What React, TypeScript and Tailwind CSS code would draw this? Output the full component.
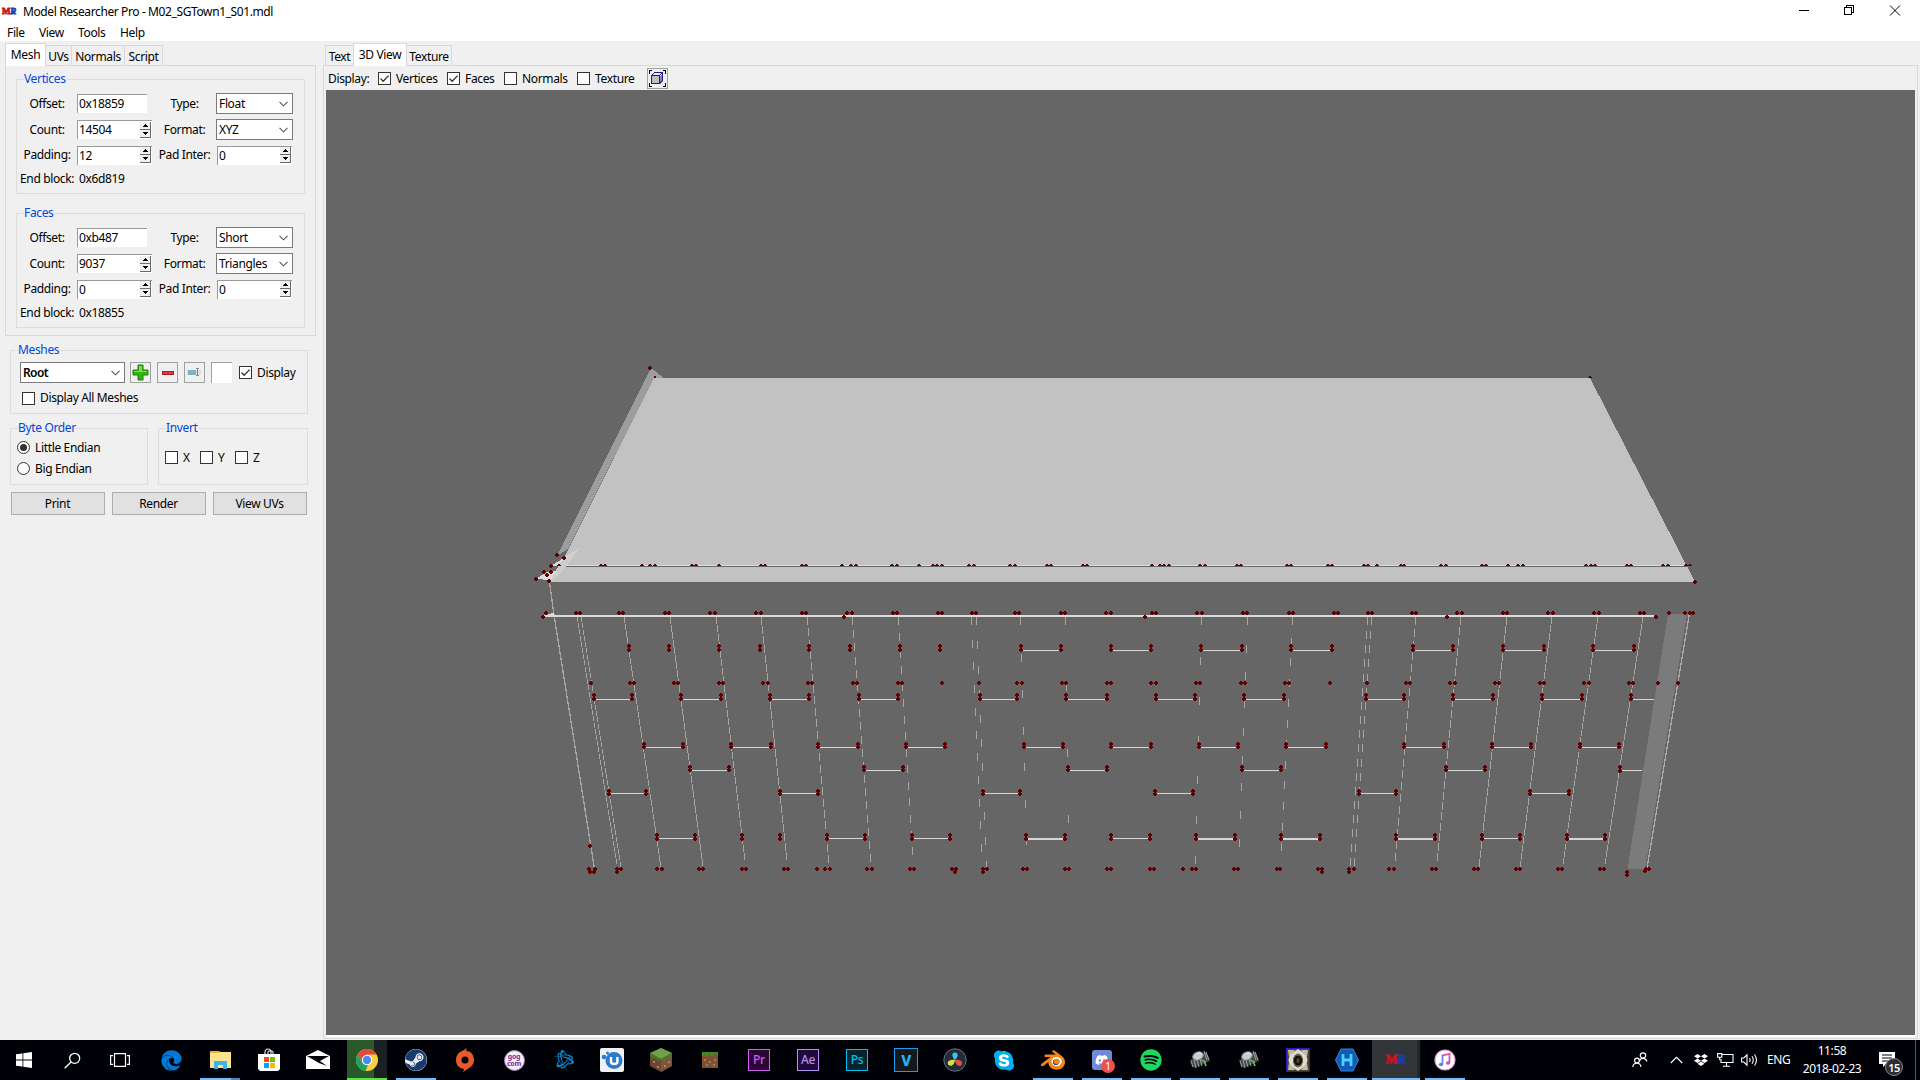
import React from "react";
import { FaEdge, FaSteam, FaSpotify, FaDropbox, FaSkype, FaDiscord, FaBattleNet } from "react-icons/fa";
import { SiBlender } from "react-icons/si";

/* ---------- form controls ---------- */

function Check({ on = false }: { on?: boolean }) {
  return (
    <span className="flex size-[13px] shrink-0 border border-[#333] bg-white">
      {on && (
        <svg viewBox="0 0 11 11" className="size-[11px]" fill="none" stroke="#333" strokeWidth="1.3">
          <path d="M1.5 5.5 4.2 8.2 9.6 2.6" />
        </svg>
      )}
    </span>
  );
}

function Radio({ on = false }: { on?: boolean }) {
  return (
    <span className="flex size-[13px] shrink-0 items-center justify-center rounded-full border border-[#333] bg-white">
      {on && <span className="size-[7px] rounded-full bg-[#333]" />}
    </span>
  );
}

function Select({ value, wide = false }: { value: string; wide?: boolean }) {
  return (
    <div className={(wide ? "w-[105px] font-semibold tracking-[-0.6px]" : "-ml-px w-[77px]") + " flex h-[21px] shrink-0 items-center justify-between border border-[#7a7a7a] bg-white pr-[4px] pl-[2px]"}>
      <span>{value}</span>
      <svg viewBox="0 0 9 6" className="h-[6px] w-[9px]" fill="none" stroke="#555" strokeWidth="1.1">
        <path d="M.5.8 4.5 4.8 8.5.8" />
      </svg>
    </div>
  );
}

function Entry({ value }: { value: string }) {
  return <div className="flex h-[19px] w-[70px] shrink-0 items-center border-t border-l border-[#999] bg-white pl-px">{value}</div>;
}

function Spin({ value }: { value: string }) {
  return (
    <div className="flex h-[19px] w-[75px] shrink-0 items-center justify-between border-t border-l border-[#999] bg-white pl-px">
      <span>{value}</span>
      <svg viewBox="0 0 12 17" className="h-[17px] w-[12px]" shapeRendering="crispEdges">
        <path d="M0 0h11v16H0z" fill="#f0f0f0" />
        <path d="M10.500 0v16M0 7.500h11M0 15.500h11" stroke="#6b6b6b" fill="none" />
        <path d="M3 5h5V4H7V3H6V2H5v1H4v1H3zM3 10h5v1H7v1H6v1H5v-1H4v-1H3z" fill="#000" />
      </svg>
    </div>
  );
}

function Group({ title, className, children }: { title: string; className: string; children: React.ReactNode }) {
  return (
    <section className={"flex flex-col border border-[#dcdcdc] " + className}>
      <h2 className="-mt-[10px] ml-[7px] flex h-[18px] w-fit shrink-0 items-center bg-[#f0f0f0] text-[#0046d5]">{title}</h2>
      {children}
    </section>
  );
}

type BlockData = { title: string; offset: string; type: string; count: string; format: string; padding: string; inter: string; end: string };

function BlockGroup({ d, className }: { d: BlockData; className: string }) {
  const row = "grid grid-cols-[60px_75px_65px_77px] items-center shrink-0";
  const lab = "text-center whitespace-nowrap";
  return (
    <Group title={d.title} className={"h-[115px] w-[289px] " + className}>
      <div className={row + " mt-[3px] h-[25px]"}>
        <span className={lab}>Offset:</span>
        <Entry value={d.offset} />
        <span className={lab}>Type:</span>
        <Select value={d.type} />
      </div>
      <div className={row + " h-[27px]"}>
        <span className={lab}>Count:</span>
        <Spin value={d.count} />
        <span className={lab}>Format:</span>
        <Select value={d.format} />
      </div>
      <div className={row + " h-[24px]"}>
        <span className={lab}>Padding:</span>
        <Spin value={d.padding} />
        <span className={lab}>Pad Inter:</span>
        <Spin value={d.inter} />
      </div>
      <div className="flex h-[23px] items-center pl-[3px]">
        <span className="w-[59px]">End block:</span>
        <span>{d.end}</span>
      </div>
    </Group>
  );
}

function Tab({ label, active = false, className }: { label: string; active?: boolean; className: string }) {
  return (
    <div
      className={
        (active ? "h-[23px] bg-white border-x pb-px " : "h-[20px] border-r pt-[2px] ") +
        "flex shrink-0 items-center justify-center border-t border-[#d9d9d9] whitespace-nowrap " +
        className
      }
    >
      {label}
    </div>
  );
}

/* ---------- 3D scene ---------- */

type Part = {
  x0: number;
  sx: number;
  walls: [number, number][];
  dots: [number, number[]][];
  bars: [number, number, [number, number, number?][]][];
};

const SY = 2.9037;
const Y = (v: number) => 350 + v / SY;

const parts: Part[] = [
  {
    x0: 520,
    sx: 2.6133,
    walls: [[149, 255], [160, 265], [273, 370], [393, 480], [512, 590], [630, 700], [751, 809], [869, 919], [989, 1029], [1180, 1209], [1193, 1220], [1307, 1325], [1425, 1435]],
    dots: [
      [763, [69, 146, 157, 259, 270, 379, 390, 497, 510, 617, 629, 736, 748, 855, 867, 974, 985, 1093, 1102, 1180, 1192, 1293, 1304, 1413, 1424]],
      [776, [60, 847]],
      [866, [285, 390, 520, 627, 756, 862, 992, 1098]],
      [968, [186, 287, 297, 403, 414, 520, 531, 636, 648, 753, 764, 870, 881, 987, 998, 1103, 1199, 1300, 1311, 1416, 1427]],
      [1415, [580, 680]],
      [1507, [181, 197, 253, 264, 357, 370, 468, 479, 579, 590, 690, 700, 777, 798, 809, 908, 919, 1019, 1030, 1129, 1140, 1210, 1220, 1315, 1324, 1425, 1435]],
      [1517, [183, 194, 254, 1138, 1210]],
      [1439, [182]], [51, [341]], [594, [96]], [605, [116]], [627, [80]], [644, [63, 80]], [653, [70]], [664, [41]], [671, [77]],
    ],
    bars: [
      [860, 872, [[1308, 1414]]],
      [1003, 1014, [[193, 292], [421, 525], [653, 756], [885, 989], [1201, 1300], [1428, 1533]]],
      [1143, 1154, [[323, 426], [551, 655], [780, 884], [1010, 1111], [1316, 1418]]],
      [1211, 1221, [[445, 547], [900, 1001], [1431, 1533]]],
      [1280, 1288, [[233, 329], [679, 779], [1211, 1307]]],
      [1409, 1419, [[358, 458], [802, 902], [1025, 1125], [1323, 1423, 2]]],
    ],
  },
  {
    x0: 1100,
    sx: 2.529,
    walls: [[258, 242], [373, 350], [487, 456], [676, 631], [687, 642], [798, 744], [912, 850], [1028, 957], [1144, 1063], [1259, 1169], [1374, 1276]],
    dots: [
      [763, [15, 27, 131, 142, 246, 257, 362, 373, 478, 489, 592, 602, 678, 689, 788, 799, 903, 915, 1020, 1030, 1134, 1146, 1249, 1262, 1366, 1376, 1439, 1479, 1491, 1500]],
      [776, [115, 878, 1405]],
      [968, [17, 28, 129, 141, 243, 254, 356, 367, 468, 479, 582, 676, 773, 784, 885, 897, 998, 1010, 1112, 1122, 1225, 1236, 1338, 1348, 1410, 1461]],
      [1507, [18, 29, 126, 137, 210, 232, 243, 340, 350, 447, 456, 551, 562, 630, 642, 732, 743, 839, 850, 945, 956, 1052, 1063, 1158, 1169, 1264, 1275, 1380, 1388]],
      [1517, [561, 630, 1334]], [1513, [1378]], [1523, [1334]], [673, [1504]],
    ],
    bars: [
      [860, 872, [[28, 130], [255, 358], [484, 587], [791, 893], [1019, 1122], [1247, 1350]]],
      [1003, 1014, [[141, 241], [365, 466], [673, 769], [893, 994], [1118, 1218]]],
      [1143, 1154, [[28, 128], [250, 349], [471, 571], [769, 870], [991, 1090], [1214, 1313]]],
      [1211, 1221, [[358, 458], [875, 974]]],
      [1280, 1288, [[138, 236], [655, 748], [1087, 1186]]],
      [1409, 1419, [[29, 126], [243, 341, 2], [459, 556, 2], [749, 847, 2], [965, 1062], [1180, 1277, 2]]],
    ],
  },
];

const eaves: number[][] = [
  [211, 223, 319, 341, 353, 449, 460, 520, 629, 640, 736, 748, 842, 866, 878, 973, 985, 1044, 1080, 1091, 1102, 1174, 1186, 1281, 1293, 1376, 1387, 1470, 1482, 103],
  [131, 152, 163, 174, 254, 266, 346, 357, 473, 484, 577, 587, 668, 678, 700, 760, 770, 862, 874, 966, 977, 1032, 1057, 1069, 1230, 1241, 1251, 1333, 1344, 1425, 1436, 1482, 1493],
];

const dot = (cx: number, cy: number) => `M${Math.round(cx) - 1} ${Math.round(cy) - 2}h2v1h1v2h-1v1h-2v-1h-1v-2h1z`;

function Scene() {
  let d = "";
  const lines: React.ReactNode[] = [];
  parts.forEach((p, i) => {
    const X = (v: number) => p.x0 + v / p.sx;
    p.walls.forEach(([a, b], k) => {
      const period = 252 / (Math.abs(b - a) / p.sx);
      const dash = Math.min(period - 1, 7.5);
      // each dash stays inside one pixel column, so every step is a plain vertical stroke
      let path = "";
      const n = Math.round(252 / period);
      for (let s = 0; s <= n; s++) {
        const y = 617 + s * period;
        if (y + dash > 869) break;
        const x = Math.floor(X(a) + ((y - 617 + dash / 2) / 252) * (X(b) - X(a)));
        path += `M${x} ${Math.round(y)}h1v${Math.round(dash)}h-1z`;
      }
      lines.push(<path key={`w${i}-${k}`} d={path} fill="#a6a6a6" />);
    });
    p.dots.forEach(([y, xs]) =>
      xs.forEach((x) => {
        if (y === 866 || y === 1415) d += dot(X(x), Y(y) - 2) + dot(X(x), Y(y) + 2);
        else d += dot(X(x), Y(y));
      }),
    );
    p.bars.forEach(([ya, yb, xs], r) =>
      xs.forEach(([a, b, h = 1], k) => {
        lines.push(<rect key={`b${i}-${r}-${k}`} x={Math.round(X(a))} y={Math.floor(Y(yb))} width={Math.round((b - a) / p.sx)} height={h} fill="#d6d6d6" />);
        [a, b].forEach((x) => {
          d += dot(X(x), Y(ya)) + dot(X(x), Y(yb));
        });
      }),
    );
    eaves[i].forEach((x) => {
      d += `M${Math.round(X(x)) - 2} 566v-1h1v-1h2v1h1v1z`;
    });
  });
  return (
    <svg viewBox="326 90 1589 945" className="block h-[945px] w-[1589px] bg-[#666]" shapeRendering="crispEdges">
      <path d="M654 378H1590L1695 582H550L565 566V556z" fill="#c2c2c2" />
      <path d="M651 368 664 378H654L568 549 557 556z" fill="#9d9d9d" />
      <path d="M580 548 565 557 551 566H560z" fill="#d8d8d8" />
      <path d="M580 548 561 562 556 570 549 581H552L562 572z" fill="#cdcdcd" />
      <path d="M536 579 547 572 557 571 550 580z" fill="#dcdcdc" />
      <path d="M566 565H1686V566H566z" fill="#dedede" />
      <path d="M566 566H1687V567H566z" fill="#666" />
      <path d="M549.500 582 554 615 594.500 869" stroke="#a6a6a6" strokeWidth="1.3" fill="none" />
      <path d="M544 615H1654V617H544z" fill="#dadada" />
      <path d="M547 615 552 613H554V617z" fill="#dadada" />
      {lines}
      <path d="M1631 699h23v1h-23zM1620 770h22v1h-22z" fill="#d6d6d6" />
      <path d="M1668 614H1687L1645 869H1627.500z" fill="#7b7b7b" />
      <path d="M1689.500 613 1647 868" stroke="#aaa" fill="none" strokeWidth="1.2" />
      <path d={dot(1630.700, 695.400) + dot(1630.700, 699.400) + dot(1619.500, 767) + dot(1619.500, 770.500) + d} fill="#600000" />
      <path d="M654 376h2v2h-2zM1589 376h2v1h1v1h-4v-1h1z" fill="#600000" />
    </svg>
  );
}

/* ---------- taskbar ---------- */

function Adobe({ t, c, bg }: { t: string; c: string; bg: string }) {
  return (
    <span style={{ borderColor: c, color: c, background: bg }} className="flex size-[22px] items-center justify-center border pb-px text-[12px] leading-none font-medium tracking-[-0.3px]">
      {t}
    </span>
  );
}

function Chip() {
  return (
    <svg viewBox="0 0 24 24" className="size-6" fill="none">
      <path d="M2 12 18 4l4 9L6 20z" fill="#454545" />
      <path d="m3 13 2 6m1-7 2 8m1-8 2 7m1-8 2 7m4-14 3 8m-5-9 3 9" stroke="#9a9a9a" strokeWidth="1.100" />
      <ellipse cx="10" cy="8" rx="5.500" ry="4" fill="#c3ced4" stroke="#808080" transform="rotate(-20 10 8)" />
      <path d="M9 5.500q3-1.500 5 .5" stroke="#f2f6f8" />
      <path d="m13 12 5 2M16 13l2 5" stroke="#66b36c" strokeWidth="1.800" />
    </svg>
  );
}

function Logo({ className }: { className: string }) {
  return (
    <span className={"flex items-center font-['Liberation_Serif'] leading-none font-bold " + className}>
      <span className="text-[#c8161d] [-webkit-text-stroke:0.8px_#c8161d]">M</span>
      <span className="text-[#1740a8] italic [-webkit-text-stroke:0.8px_#1740a8]">R</span>
    </span>
  );
}

const S = ({ children, c = "size-6" }: { children: React.ReactNode; c?: string }) => (
  <svg viewBox="0 0 24 24" className={c} fill="none">
    {children}
  </svg>
);

type App = { icon: React.ReactNode; run?: boolean };
const apps: App[] = [
  { icon: <FaEdge className="size-[21px] text-[#0078d7]" /> },
  {
    icon: (
      <S>
        <path d="M2 3h9l1 1h11v16H2z" fill="#fbe28c" />
        <path d="M2 3h9v2H2z" fill="#e8b72c" />
        <path d="M6 13h13v8h-4v-4h-5v4H6z" fill="#3fb2e8" />
      </S>
    ),
    run: true,
  },
  {
    icon: (
      <S>
        <path d="M8 7V4a3 3 0 0 1 6 0v3M11 7V4a3 3 0 0 1 5 0v3" stroke="#ddd" strokeWidth="1.200" />
        <path d="M1 6h22v15l-2 2H3l-2-2z" fill="#fff" />
        <path d="M7 9h5v5H7z" fill="#f25022" />
        <path d="M13 9h5v5h-5z" fill="#7fba00" />
        <path d="M7 15h5v5H7z" fill="#00a4ef" />
        <path d="M13 15h5v5h-5z" fill="#ffb900" />
      </S>
    ),
  },
  {
    icon: (
      <S>
        <path d="M0 8 12 2l12 6v13H0z" fill="#fff" />
        <path d="M1 8h22l-9 5 7 5-8-3z" fill="#000207" />
      </S>
    ),
  },
  {
    icon: (
      <S>
        <circle cx="12" cy="12" r="11" fill="#fbcf3c" />
        <path d="M2.500 6.500A11 11 0 0 1 21.500 6.500H12L7.500 14.500z" fill="#dd4b3e" />
        <path d="M2.500 6.500 7.500 14.500 13 17l-2.500 6A11 11 0 0 1 2.500 6.500" fill="#1da462" />
        <circle cx="12" cy="12" r="5.200" fill="#fff" />
        <circle cx="12" cy="12" r="4.200" fill="#4c8bf5" />
      </S>
    ),
  },
  {
    icon: (
      <span className="flex size-[22px] items-center justify-center rounded-full bg-[#e8edf2]">
        <FaSteam className="size-[22px] text-[#163b6e]" />
      </span>
    ),
    run: true,
  },
  {
    icon: (
      <S>
        <path d="M14 0 13 3c6 0 8 5 8 9 0 6-5 8-8 10l-3 2 1-3c-6-1-8-5-8-9C3 6 7 4 10 2.500z" fill="#e8592b" />
        <circle cx="12" cy="12" r="3.500" fill="#000207" />
      </S>
    ),
  },
  {
    icon: (
      <span className="flex size-[21px] flex-col items-center justify-center rounded-full border border-[#a678b8] bg-[#f4eef6] pb-px text-center text-[7px] leading-[7px] font-bold tracking-[-0.2px] whitespace-pre text-[#7a2f93]">
        {"gog\ncom"}
      </span>
    ),
  },
  { icon: <FaBattleNet className="size-[21px] text-[#0e86d4]" /> },
  {
    icon: (
      <S>
        <rect width="24" height="24" rx="2" fill="#eef1f4" />
        <circle cx="14" cy="12.500" r="8.500" fill="#2f7ac8" />
        <circle cx="4" cy="9" r="2.300" fill="#2f7ac8" />
        <circle cx="7.500" cy="5" r="1.500" fill="#2f7ac8" />
        <path d="M11 9v4.500q0 2.500 3.200 2.500t3.200-2.500V9" stroke="#fff" strokeWidth="2.500" />
      </S>
    ),
  },
  {
    icon: (
      <S>
        <path d="m12 0 11 5v13l-11 6L1 18V5z" fill="#6b4630" />
        <path d="m12 0 11 5-11 6L1 5z" fill="#6fa04b" />
        <path d="m1 5 11 6 11-6v3l-3 3-2-1-3 3-3-1-3 1-3-3-2 1-2-2z" fill="#3f7a2c" />
        <path d="M12 12v12l11-6V8z" fill="#8b5f43" opacity=".6" />
        <path d="M4 13h2v2H4zm4 5h2v2H8zm7-1h2v2h-2zm4-4h2v2h-2z" fill="#a98467" />
      </S>
    ),
  },
  {
    icon: (
      <S>
        <path d="M4 4h16v16H4z" fill="#7c5236" />
        <path d="M4 4h16v3h-2V6h-2v2h-3V6h-2v2H8V7H6v1H4z" fill="#3f8a22" />
        <path d="M6 11h2v2H6zm5 2h2v2h-2zm5-2h2v2h-2zM8 16h2v2H8zm7 0h2v2h-2z" fill="#a87b55" />
      </S>
    ),
  },
  { icon: <Adobe t="Pr" c="#d35bf0" bg="#2a0634" /> },
  { icon: <Adobe t="Ae" c="#b58cf0" bg="#1f0a40" /> },
  { icon: <Adobe t="Ps" c="#00c0f0" bg="#062430" /> },
  {
    icon: <span className="flex size-6 items-center justify-center border border-[#1c9cea] bg-[#15191d] text-[15px] leading-none font-extrabold text-[#21b4f5]">V</span>,
  },
  {
    icon: (
      <S>
        <circle cx="12" cy="12" r="11.200" fill="#202c38" stroke="#66727c" />
        <path d="M12 12C8 8 9 4.500 12 4.500S16 8 12 12" fill="#38c4ee" />
        <path d="M12 12c-1 6-4.500 6.500-6.500 5S5 11 12 12" fill="#d9dc48" />
        <path d="M12 12c7-1 8 3 6.500 5s-6 1-6.500-5" fill="#ee4a43" />
      </S>
    ),
  },
  {
    icon: (
      <span className="flex size-[22px] items-center justify-center rounded-full bg-[radial-gradient(circle,#fff_55%,transparent_56%)]">
        <FaSkype className="size-[23px] text-[#00aff0]" />
      </span>
    ),
  },
  {
    icon: (
      <span className="flex size-6 items-center justify-center bg-[radial-gradient(circle_at_15px_14px,#1a5296_3px,#fff_3.5px,#fff_6px,transparent_6.5px)]">
        <SiBlender className="size-6" color="#f5851f" />
      </span>
    ),
    run: true,
  },
  {
    icon: (
      <span className="relative flex size-5 items-center justify-center rounded-[3px] bg-[#7289da]">
        <FaDiscord className="size-[14px] text-white" />
        <span className="absolute top-[9px] left-[9px] flex size-[14px] items-center justify-center rounded-full bg-[#f04f4f] text-[10px] leading-none text-white">1</span>
      </span>
    ),
    run: true,
  },
  { icon: <FaSpotify className="size-[22px] text-[#1ed760]" />, run: true },
  { icon: <Chip />, run: true },
  { icon: <Chip />, run: true },
  {
    icon: (
      <S>
        <path d="M.5.5h23v23H.5z" fill="#4a4434" stroke="#2a18c0" />
        <path d="M2 2h7L3 9zM22 2h-7l6 7zM2 22h7l-6-7zM22 22h-7l6-7z" fill="#c8bd98" />
        <path d="M12 1Q31 12 12 23-7 12 12 1" fill="#dcdcd4" />
        <ellipse cx="12" cy="12.500" rx="5" ry="7" fill="#6f6a54" />
        <ellipse cx="12" cy="12.500" rx="4.500" ry="5.500" fill="#14110c" stroke="#6e633e" />
        <ellipse cx="12" cy="12.500" rx="1.500" ry="2.500" fill="#5c4a20" />
      </S>
    ),
    run: true,
  },
  {
    icon: (
      <S>
        <path d="M6 1h12l5.500 11L18 23H6L.5 12z" fill="#1458b8" stroke="#2f84dd" />
        <path d="M8 6v12M16 6v12M8 12h8" stroke="#46d3f7" strokeWidth="2.800" />
      </S>
    ),
    run: true,
  },
  { icon: <Logo className="pb-[3px] pl-[2px] text-[13px]" />, run: true },
  {
    icon: (
      <S>
        <defs>
          <linearGradient id="note" x1="0" y1="1" x2="1" y2="0">
            <stop offset="0" stopColor="#3b9ef2" />
            <stop offset=".5" stopColor="#a45de0" />
            <stop offset="1" stopColor="#fb4a73" />
          </linearGradient>
        </defs>
        <circle cx="12" cy="12" r="10" fill="#fff" stroke="#e9a3cf" strokeWidth="1.200" />
        <path d="M9.500 16V7.500l7-1.700v9" stroke="url(#note)" strokeWidth="1.800" />
        <ellipse cx="8" cy="16.500" rx="2.200" ry="1.800" fill="#6a7cea" />
        <ellipse cx="15" cy="15" rx="2.200" ry="1.800" fill="#d455b0" />
      </S>
    ),
    run: true,
  },
];

const CHROME = 4;
const CURRENT = apps.length - 2;

function Taskbar() {
  return (
    <footer className="flex h-10 shrink-0 items-stretch bg-[#000207] text-white">
      <div className="flex w-12 items-center justify-center">
        <svg viewBox="0 0 16 16" className="size-4" fill="#fff">
          <path d="M0 2.300 6.500 1.400v6.200H0zM7.300 1.300 16 0v7.600H7.300zM0 8.400h6.500v6.200L0 13.700zM7.300 8.400H16V16l-8.700-1.300z" />
        </svg>
      </div>
      <div className="flex w-12 items-center justify-center">
        <svg viewBox="0 0 18 18" className="size-[17px]" fill="none" stroke="#fff" strokeWidth="1.400">
          <circle cx="11.300" cy="6.700" r="5.300" />
          <path d="M7.500 10.500.7 17.300" />
        </svg>
      </div>
      <div className="flex w-[50.5px] shrink-0 items-center justify-center pr-[2px]">
        <svg viewBox="0 0 20 14" className="h-[14px] w-5" fill="none" stroke="#fff" strokeWidth="1.200">
          <path d="M4.500.6h11v12.800h-11zM3 2.600H.6v8.800H3M17 2.600h2.400v8.800H17" />
        </svg>
      </div>
      {apps.map((a, i) => (
        <div key={i} className="flex w-[49px] shrink-0 justify-center">
          <div
            className={
              (i === CURRENT ? "w-12 shrink-0 bg-[#333639] " : i === CHROME ? "w-10 bg-linear-to-r from-[#29592a] from-67% to-[#1b2022] to-67% " : "w-10 ") +
              "flex flex-col items-center"
            }
          >
            <div className={(i === CURRENT ? "w-full border-r-[3px] border-[#25282b] " : "") + "flex h-[38px] items-center justify-center pt-[2px]"}>{a.icon}</div>
            {i === CHROME && <div className="h-[2px] w-10 bg-[#58e63e]" />}
            {i === 1 && (
              <div className="flex h-[2px] w-10 bg-[#5583b5]">
                <div className="w-[31px] bg-[#76b9f5]" />
              </div>
            )}
            {a.run && i !== 1 && <div className="h-[2px] w-full bg-[#76b9f5]" />}
          </div>
        </div>
      ))}
      <div className="ml-auto flex items-center">
        <svg viewBox="0 0 16 16" className="size-4" fill="none" stroke="#fff" strokeWidth="1.200">
          <circle cx="11" cy="3.500" r="2.700" />
          <path d="M7.500 9c1-3.500 6.500-3.500 7.300.5" />
          <circle cx="5" cy="8.500" r="2.400" />
          <path d="M.8 15c.4-5 7.600-5 8.200 0" />
        </svg>
        <svg viewBox="0 0 13 8" className="ml-[22px] h-2 w-[13px]" fill="none" stroke="#fff" strokeWidth="1.200">
          <path d="M.8 7 6.500 1.300 12.200 7" />
        </svg>
        <FaDropbox className="ml-[11px] size-[14px]" />
        <svg viewBox="0 0 17 14" className="ml-[9px] h-[14px] w-[17px]" fill="none" stroke="#fff" strokeWidth="1.100">
          <path d="M5 1.500h11v8H4V6M.6.6h4.200v3.600H.6zM2.700 4.200v3M9.500 9.500v3.500M6 13.300h7" />
        </svg>
        <svg viewBox="0 0 18 14" className="ml-[7px] h-[14px] w-[18px]" fill="none" stroke="#fff" strokeWidth="1.100">
          <path d="M.6 5h2.200L6 1.800v10.400L2.800 9H.6zM8.500 5q1.300 2 0 4M11 3.300q2.600 3.700 0 7.400M13.500 1.500q4 5.500 0 11" />
        </svg>
        <span className="ml-[8px] w-[23px] tracking-[-0.4px] whitespace-nowrap">ENG</span>
        <div className="ml-[12px] flex w-[60px] flex-col items-center leading-[18px] tracking-[-0.4px] whitespace-nowrap">
          <span>11:58</span>
          <span>2018-02-23</span>
        </div>
        <div className="relative ml-[16px] size-6">
          <svg viewBox="0 0 24 24" className="size-6">
            <path d="M1 4h16v12H8l-3 3v-3H1z" fill="#fff" />
            <path d="M4 7h10M4 10h10M4 13h6" stroke="#000" />
          </svg>
          <span className="absolute top-[10px] left-[7px] flex size-[18px] items-center justify-center rounded-full border border-[#888] bg-[#2c2e31] text-[11px] leading-none font-semibold tracking-[-0.5px]">15</span>
        </div>
      </div>
      <div className="ml-[13px] w-[5px] border-l border-[#55585c]" />
    </footer>
  );
}

/* ---------- window ---------- */

const vertices: BlockData = { title: "Vertices", offset: "0x18859", type: "Float", count: "14504", format: "XYZ", padding: "12", inter: "0", end: "0x6d819" };
const faces: BlockData = { title: "Faces", offset: "0xb487", type: "Short", count: "9037", format: "Triangles", padding: "0", inter: "0", end: "0x18855" };

const toolBtn = "flex size-[21px] shrink-0 items-center justify-center border border-[#a0a0a0] bg-[#f0f0f0]";
const pushBtn = "flex h-[23px] w-[94px] items-center justify-center border border-[#adadad] bg-[#e1e1e1] pr-px";

export default function App() {
  return (
    <div className="flex h-[1080px] w-[1920px] flex-col overflow-hidden bg-[#f0f0f0] font-['Noto_Sans',sans-serif] text-[12px] leading-[16px] tracking-[-0.35px] text-black">
      <header className="flex h-[41px] shrink-0 flex-col bg-white">
        <div className="flex h-[23px] items-center">
          <Logo className="ml-[2px] w-[16px] text-[9px]" />
          <span className="mt-px ml-[5px] tracking-[-0.39px]">Model Researcher Pro - M02_SGTown1_S01.mdl</span>
          <svg viewBox="0 0 102 11" className="mr-[19px] mb-[2px] ml-auto h-[11px] w-[102px]" fill="none" stroke="#000" shapeRendering="crispEdges">
            <path d="M0 5.500h10M45.500 2.500h7v7h-7zM47.500 2.500v-2h7v7h-2" />
            <path d="m91 .5 10 10M101 .5l-10 10" shapeRendering="auto" />
          </svg>
        </div>
        <nav className="flex h-[18px] items-center pt-px pl-[7px]">
          <span className="w-8">File</span>
          <span className="w-[39px]">View</span>
          <span className="w-[42px]">Tools</span>
          <span>Help</span>
        </nav>
      </header>

      <main className="flex min-h-0 flex-1 pt-[2px]">
        <aside className="flex w-[323px] shrink-0 flex-col pl-[5px]">
          <div className="flex h-[22px] items-end">
            <Tab label="Mesh" active className="z-10 -mb-px w-[41px]" />
            <Tab label="UVs" className="w-[26px]" />
            <Tab label="Normals" className="w-[53px]" />
            <Tab label="Script" className="w-[38px]" />
          </div>
          <div className="flex h-[271px] w-[311px] shrink-0 flex-col border border-[#d9d9d9] pt-[13px] pl-[10px]">
            <BlockGroup d={vertices} className="" />
            <BlockGroup d={faces} className="mt-[19px]" />
          </div>

          <Group title="Meshes" className="mt-[14px] ml-[5px] h-[64px] w-[298px] shrink-0">
            <div className="mt-[3px] flex h-[21px] shrink-0 items-center pl-[9px]">
              <Select value="Root" wide />
              <span className={toolBtn + " ml-[5px]"}>
                <svg viewBox="0 0 17 17" className="size-[17px]">
                  <path d="M6 1h5v5h5v5h-5v5H6v-5H1V6h5z" fill="#35b312" stroke="#1d7d0b" />
                  <path d="M7 2h3v5h5v1H2V7h5z" fill="#7bdc50" />
                </svg>
              </span>
              <span className={toolBtn + " ml-[6px]"}>
                <span className="h-[4px] w-[12px] border border-[#a81c22] bg-[#dc3a3e]" />
              </span>
              <span className={toolBtn + " ml-[6px]"}>
                <svg viewBox="0 0 15 9" className="h-[9px] w-[15px]">
                  <path d="M0 2h14v5H0z" fill="#ddd" />
                  <path d="M1 2h8v5H1z" fill="#7bb5c2" />
                  <path d="M9 .5h3M9 7.500h3M10.500.5v7" stroke="#888" />
                </svg>
              </span>
              <span className="ml-[6px] size-[21px] border-t border-l border-[#a0a0a0] bg-white" />
              <span className="ml-[7px] flex items-center gap-[5px]">
                <Check on />
                Display
              </span>
            </div>
            <div className="mt-[7px] flex items-center gap-[5px] pl-[11px]">
              <Check />
              Display All Meshes
            </div>
          </Group>

          <div className="mt-[14px] ml-[5px] flex shrink-0 gap-[10px]">
            <Group title="Byte Order" className="h-[57px] w-[138px]">
              <div className="flex h-[21px] items-center gap-[5px] pl-[6px]">
                <Radio on />
                Little Endian
              </div>
              <div className="flex h-[21px] items-center gap-[5px] pl-[6px]">
                <Radio />
                Big Endian
              </div>
            </Group>
            <Group title="Invert" className="h-[57px] w-[150px]">
              <div className="mt-[10px] flex h-[21px] items-center pl-[6px]">
                {["X", "Y", "Z"].map((a) => (
                  <span key={a} className="flex w-[35px] items-center gap-[5px]">
                    <Check />
                    {a}
                  </span>
                ))}
              </div>
            </Group>
          </div>

          <div className="mt-[7px] ml-[6px] flex gap-[7px]">
            <div className={pushBtn}>Print</div>
            <div className={pushBtn}>Render</div>
            <div className={pushBtn}>View UVs</div>
          </div>
        </aside>

        <section className="flex w-[1595px] shrink-0 flex-col">
          <div className="flex h-[22px] items-end pl-[2px]">
            <Tab label="Text" className="w-[29px] border-l" />
            <Tab label="3D View" active className="z-10 -mb-px -ml-px w-[54px]" />
            <Tab label="Texture" className="w-[45px]" />
          </div>
          <div className="flex h-[974px] flex-col border border-[#d9d9d9] bg-[#f0f0f0]">
            <div className="flex h-[24px] shrink-0 items-center pt-px pl-[4px]">
              <span className="w-[50px]">Display:</span>
              <span className="flex w-[69px] items-center gap-[5px]"><Check on />Vertices</span>
              <span className="flex w-[57px] items-center gap-[5px]"><Check on />Faces</span>
              <span className="flex w-[73px] items-center gap-[5px]"><Check />Normals</span>
              <span className="flex w-[70px] items-center gap-[5px]"><Check />Texture</span>
              <span className={toolBtn}>
                <svg viewBox="0 0 17 17" className="size-[17px]" fill="none" shapeRendering="crispEdges">
                  <path d="M.5 4V.5H3M14 .5h2.500V4M.5 13v3.500H3M14 16.500h2.500V13" stroke="#000" />
                  <path d="M3 6h8v8H3z" fill="#c0c0c0" />
                  <path d="m11 6 3-3v8l-3 3z" fill="#8585a0" />
                  <path d="M2.500 5.500h8v8h-8zM2.500 5.500l3-3h8l-3 3M13.500 2.500v8l-3 3" stroke="#1a1a8c" />
                </svg>
              </span>
            </div>
            <div className="ml-[2px] w-[1589px] border-b-2 border-white">
              <Scene />
            </div>
          </div>
        </section>
      </main>
      <Taskbar />
    </div>
  );
}
